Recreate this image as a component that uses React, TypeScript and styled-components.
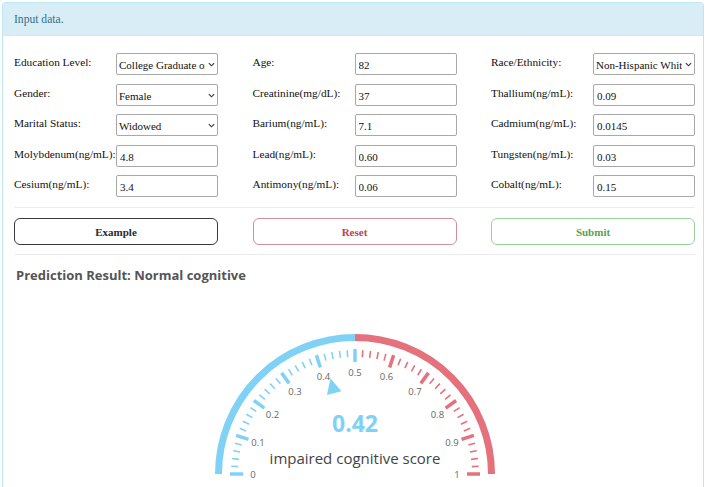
import React from "react";
import styled, { createGlobalStyle } from "styled-components";

const GlobalStyle = createGlobalStyle`
  html, body {
    margin: 0;
    padding: 0;
    background: #fff;
    overflow: hidden;
  }
  * { box-sizing: border-box; }
`;

type Field =
  | { label: string; kind: "select"; value: string }
  | { label: string; kind: "input"; value: string };

const fields: Field[] = [
  { label: "Education Level:", kind: "select", value: "College Graduate or above" },
  { label: "Age:", kind: "input", value: "82" },
  { label: "Race/Ethnicity:", kind: "select", value: "Non-Hispanic White" },
  { label: "Gender:", kind: "select", value: "Female" },
  { label: "Creatinine(mg/dL):", kind: "input", value: "37" },
  { label: "Thallium(ng/mL):", kind: "input", value: "0.09" },
  { label: "Marital Status:", kind: "select", value: "Widowed" },
  { label: "Barium(ng/mL):", kind: "input", value: "7.1" },
  { label: "Cadmium(ng/mL):", kind: "input", value: "0.0145" },
  { label: "Molybdenum(ng/mL):", kind: "input", value: "4.8" },
  { label: "Lead(ng/mL):", kind: "input", value: "0.60" },
  { label: "Tungsten(ng/mL):", kind: "input", value: "0.03" },
  { label: "Cesium(ng/mL):", kind: "input", value: "3.4" },
  { label: "Antimony(ng/mL):", kind: "input", value: "0.06" },
  { label: "Cobalt(ng/mL):", kind: "input", value: "0.15" },
];

const SERIF = `"Liberation Serif", "DejaVu Serif", serif`;
const SANS = `"Open Sans", "Noto Sans", sans-serif`;
const BLUE = "#7fd2f6";
const RED = "#e4717b";

export default function App() {
  return (
    <>
      <GlobalStyle />
      <Panel>
        <PanelHeading>Input data.</PanelHeading>
        <PanelBody>
          <FormGrid>
            {fields.map((f) => (
              <FieldGroup key={f.label}>
                <Label>{f.label}</Label>
                {f.kind === "select" ? (
                  <SelectWrap>
                    <Select defaultValue={f.value}>
                      <option>{f.value}</option>
                    </Select>
                    <Chevron viewBox="0 0 8 5">
                      <path d="M1 1 L4 4 L7 1" />
                    </Chevron>
                  </SelectWrap>
                ) : (
                  <TextInput defaultValue={f.value} />
                )}
              </FieldGroup>
            ))}
          </FormGrid>
          <Divider />
          <ButtonRow>
            <Button tone="dark">Example</Button>
            <Button tone="red">Reset</Button>
            <Button tone="green">Submit</Button>
          </ButtonRow>
          <Divider />
          <ResultTitle>Prediction Result: Normal cognitive</ResultTitle>
          <GaugeWrap>
            <Gauge value={0.42} />
          </GaugeWrap>
        </PanelBody>
      </Panel>
    </>
  );
}

function Gauge({ value }: { value: number }) {
  const cx = 150;
  const cy = 174;
  const r = 136.5;
  const pt = (v: number, rad: number) => {
    const a = Math.PI * (1 - v);
    return [cx + rad * Math.cos(a), cy - rad * Math.sin(a)];
  };
  const ticks = [];
  for (let i = 0; i <= 50; i++) {
    const v = i / 50;
    const major = i % 5 === 0;
    const [x1, y1] = pt(v, major ? 112 : 117);
    const [x2, y2] = pt(v, major ? 125 : 124);
    ticks.push(
      <line
        key={i}
        x1={x1}
        y1={y1}
        x2={x2}
        y2={y2}
        stroke={v <= 0.5 ? BLUE : RED}
        strokeWidth={major ? 3.5 : 1.6}
      />
    );
  }
  const labels = [];
  for (let k = 0; k <= 10; k++) {
    const v = k / 10;
    const [x, y] = pt(v, 102);
    labels.push(
      <text key={k} x={x} y={y} className="tick">
        {k === 0 ? "0" : k === 10 ? "1" : v.toFixed(1)}
      </text>
    );
  }
  const a = Math.PI * (1 - value);
  const dx = Math.cos(a);
  const dy = -Math.sin(a);
  const tip = [cx + 98.5 * dx, cy + 98.5 * dy];
  const base = [cx + 83.5 * dx, cy + 83.5 * dy];
  const px = -dy;
  const py = dx;
  const tri = [
    tip,
    [base[0] + 7.5 * px, base[1] + 7.5 * py],
    [base[0] - 7.5 * px, base[1] - 7.5 * py],
  ]
    .map((p) => p.join(","))
    .join(" ");

  return (
    <GaugeSvg width={300} height={187} viewBox="0 0 300 187">
      <path
        d={`M ${cx - r} ${cy} A ${r} ${r} 0 0 1 ${cx} ${cy - r}`}
        fill="none"
        stroke={BLUE}
        strokeWidth={7}
      />
      <path
        d={`M ${cx} ${cy - r} A ${r} ${r} 0 0 1 ${cx + r} ${cy}`}
        fill="none"
        stroke={RED}
        strokeWidth={7}
      />
      {ticks}
      {labels}
      <polygon points={tri} fill={BLUE} />
      <text x={cx} y={123} className="value">
        {value.toFixed(2)}
      </text>
      <text x={cx} y={158} className="caption">
        impaired cognitive score
      </text>
    </GaugeSvg>
  );
}

const Panel = styled.div`
  margin: 2px 4px 0 2px;
  border: 1px solid #bce8f1;
  border-bottom: none;
  border-radius: 4px 4px 0 0;
  height: 485px;
  overflow: hidden;
`;

const PanelHeading = styled.div`
  height: 33px;
  display: flex;
  align-items: center;
  padding: 0 11px;
  background: #d9edf7;
  color: #31708f;
  font-family: ${SERIF};
  font-size: 11.6px;
  border-bottom: 1px solid #d3e8f2;
`;

const PanelBody = styled.div`
  padding: 17px 8px 0 11px;
`;

const FormGrid = styled.div`
  display: grid;
  grid-template-columns: repeat(3, 204px);
  justify-content: space-between;
  row-gap: 8.5px;
`;

const FieldGroup = styled.div`
  display: grid;
  grid-template-columns: 102px 1fr;
  align-items: start;
`;

const Label = styled.label`
  padding-top: 2px;
  line-height: 14px;
  font-family: ${SERIF};
  font-size: 11.3px;
  color: #111;
  white-space: nowrap;
`;

const TextInput = styled.input`
  height: 22px;
  width: 100%;
  border: 1px solid #a8a8a8;
  border-radius: 2px;
  padding: 2px 2px 0 3px;
  font-family: ${SERIF};
  font-size: 11px;
  color: #111;
  background: #fff;
  outline: none;
`;

const SelectWrap = styled.div`
  position: relative;
  height: 22px;
`;

const Select = styled.select`
  appearance: none;
  -webkit-appearance: none;
  height: 22px;
  width: 100%;
  border: 1px solid #a8a8a8;
  border-radius: 2px;
  padding: 2px 12px 0 2px;
  font-family: ${SERIF};
  font-size: 11px;
  color: #111;
  background: #fff;
  outline: none;
`;

const Chevron = styled.svg`
  position: absolute;
  right: 3px;
  top: 9px;
  width: 7px;
  height: 5px;
  fill: none;
  stroke: #333;
  stroke-width: 1.3;
  pointer-events: none;
`;

const Divider = styled.div`
  height: 1px;
  background: #ececec;
  margin-top: 10px;
`;

const ButtonRow = styled.div`
  display: grid;
  grid-template-columns: repeat(3, 204px);
  justify-content: space-between;
  margin-top: 10px;
  margin-bottom: -1px;
`;

const toneColors = {
  dark: { border: "#3a3a3a", text: "#2a2a2a" },
  red: { border: "#cf8f99", text: "#c0404f" },
  green: { border: "#9ad09b", text: "#52a450" },
};

const Button = styled.button<{ tone: keyof typeof toneColors }>`
  height: 27px;
  border-radius: 6px;
  background: #fff;
  border: 1px solid ${(p) => toneColors[p.tone].border};
  color: ${(p) => toneColors[p.tone].text};
  font-family: ${SERIF};
  font-weight: bold;
  font-size: 11px;
  cursor: pointer;
`;

const ResultTitle = styled.div`
  margin-top: 10px;
  padding-left: 2px;
  line-height: 20px;
  font-family: ${SANS};
  font-weight: 700;
  font-size: 13px;
  color: #555;
`;

const GaugeWrap = styled.div`
  display: flex;
  justify-content: center;
  margin-top: 15px;
`;

const GaugeSvg = styled.svg`
  display: block;
  overflow: visible;
  text {
    text-anchor: middle;
    dominant-baseline: central;
    font-family: ${SANS};
  }
  .tick {
    font-size: 9.5px;
    fill: #666;
  }
  .value {
    font-size: 23px;
    font-weight: 700;
    fill: ${BLUE};
  }
  .caption {
    font-size: 15px;
    fill: #444;
  }
`;
